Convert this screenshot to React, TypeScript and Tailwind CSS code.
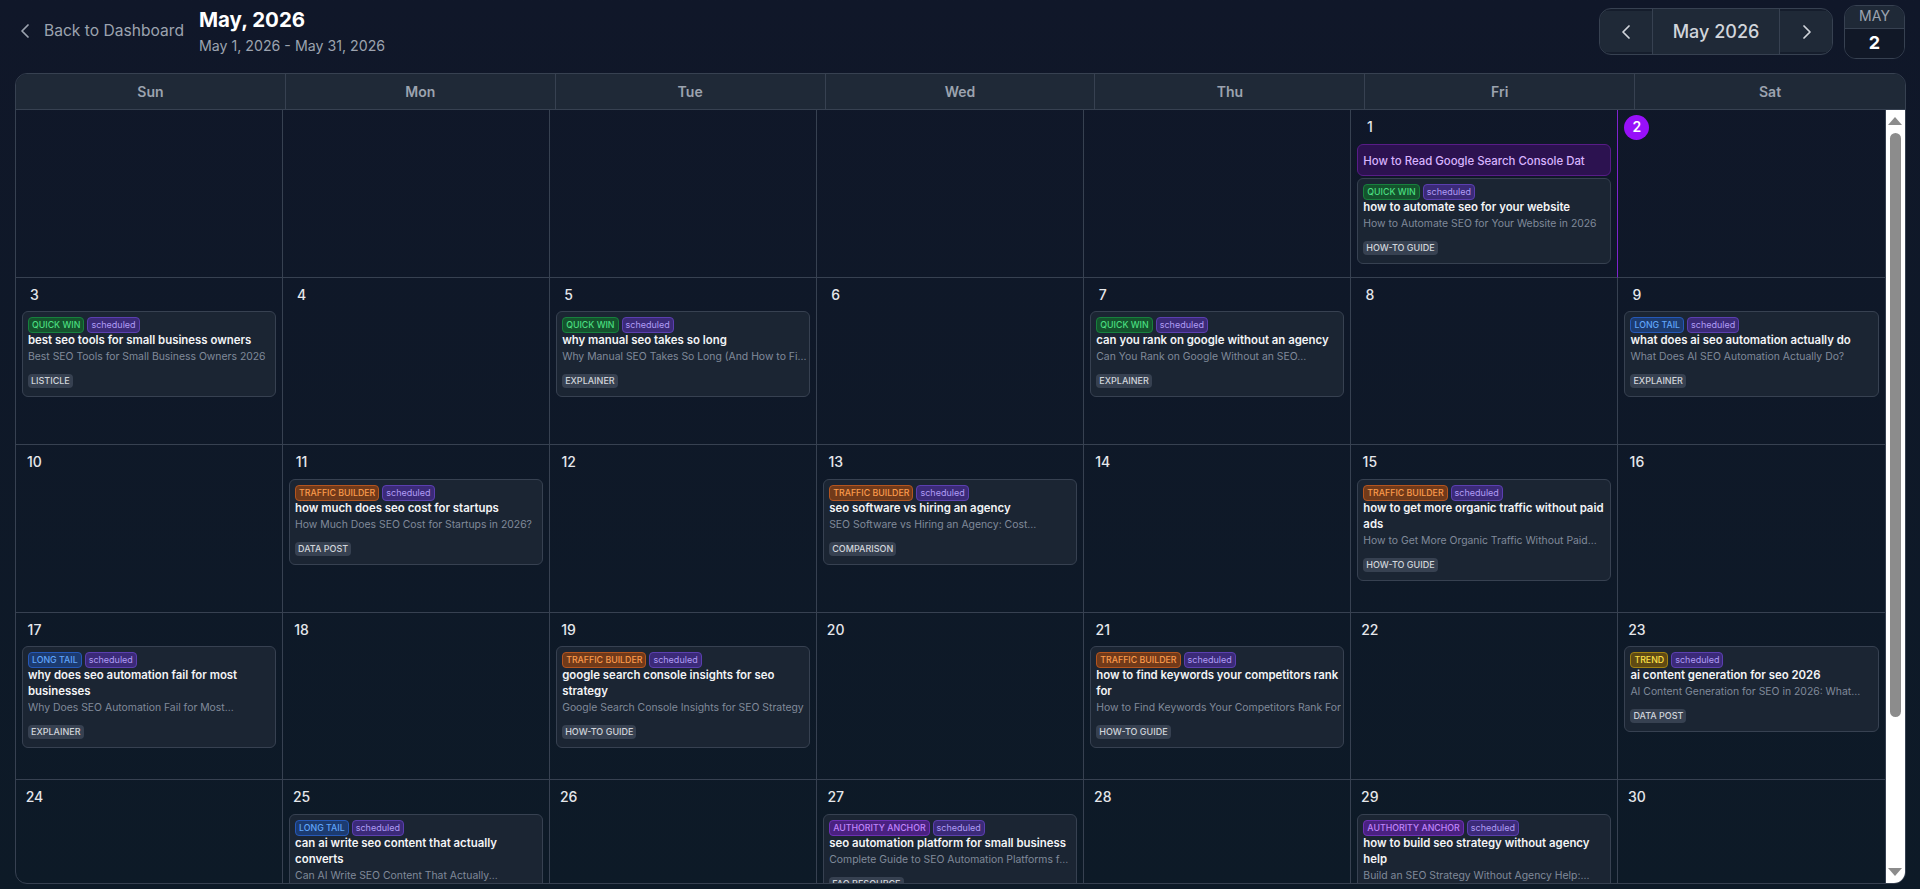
import { ChevronLeft, ChevronRight } from "lucide-react";

type Kind = "win" | "traffic" | "tail" | "trend" | "anchor";

type Post = {
  kind: Kind;
  title: string;
  sub: string;
  tag: string;
};

const kinds: Record<Kind, { label: string; className: string }> = {
  win: { label: "QUICK WIN", className: "bg-[#14532d] border-[#17803d] text-[#4ade80]" },
  traffic: { label: "TRAFFIC BUILDER", className: "bg-[#713a1a] border-[#b4541e] text-[#fb9a4c]" },
  tail: { label: "LONG TAIL", className: "bg-[#1c3b70] border-[#2558b8] text-[#60a5fa]" },
  trend: { label: "TREND", className: "bg-[#5f4a14] border-[#a18212] text-[#fde047]" },
  anchor: { label: "AUTHORITY ANCHOR", className: "bg-[#4a2180] border-[#6d2fb5] text-[#c084fc]" },
};

const weekDays = ["Sun", "Mon", "Tue", "Wed", "Thu", "Fri", "Sat"];

const days: { day?: number; posts?: Post[] }[] = [
  {}, {}, {}, {}, {},
  {
    day: 1,
    posts: [
      {
        kind: "win",
        title: "how to automate seo for your website",
        sub: "How to Automate SEO for Your Website in 2026",
        tag: "HOW-TO GUIDE",
      },
    ],
  },
  { day: 2 },
  {
    day: 3,
    posts: [
      {
        kind: "win",
        title: "best seo tools for small business owners",
        sub: "Best SEO Tools for Small Business Owners 2026",
        tag: "LISTICLE",
      },
    ],
  },
  { day: 4 },
  {
    day: 5,
    posts: [
      {
        kind: "win",
        title: "why manual seo takes so long",
        sub: "Why Manual SEO Takes So Long (And How to Fi...",
        tag: "EXPLAINER",
      },
    ],
  },
  { day: 6 },
  {
    day: 7,
    posts: [
      {
        kind: "win",
        title: "can you rank on google without an agency",
        sub: "Can You Rank on Google Without an SEO...",
        tag: "EXPLAINER",
      },
    ],
  },
  { day: 8 },
  {
    day: 9,
    posts: [
      {
        kind: "tail",
        title: "what does ai seo automation actually do",
        sub: "What Does AI SEO Automation Actually Do?",
        tag: "EXPLAINER",
      },
    ],
  },
  { day: 10 },
  {
    day: 11,
    posts: [
      {
        kind: "traffic",
        title: "how much does seo cost for startups",
        sub: "How Much Does SEO Cost for Startups in 2026?",
        tag: "DATA POST",
      },
    ],
  },
  { day: 12 },
  {
    day: 13,
    posts: [
      {
        kind: "traffic",
        title: "seo software vs hiring an agency",
        sub: "SEO Software vs Hiring an Agency: Cost...",
        tag: "COMPARISON",
      },
    ],
  },
  { day: 14 },
  {
    day: 15,
    posts: [
      {
        kind: "traffic",
        title: "how to get more organic traffic without paid ads",
        sub: "How to Get More Organic Traffic Without Paid...",
        tag: "HOW-TO GUIDE",
      },
    ],
  },
  { day: 16 },
  {
    day: 17,
    posts: [
      {
        kind: "tail",
        title: "why does seo automation fail for most businesses",
        sub: "Why Does SEO Automation Fail for Most...",
        tag: "EXPLAINER",
      },
    ],
  },
  { day: 18 },
  {
    day: 19,
    posts: [
      {
        kind: "traffic",
        title: "google search console insights for seo strategy",
        sub: "Google Search Console Insights for SEO Strategy",
        tag: "HOW-TO GUIDE",
      },
    ],
  },
  { day: 20 },
  {
    day: 21,
    posts: [
      {
        kind: "traffic",
        title: "how to find keywords your competitors rank for",
        sub: "How to Find Keywords Your Competitors Rank For",
        tag: "HOW-TO GUIDE",
      },
    ],
  },
  { day: 22 },
  {
    day: 23,
    posts: [
      {
        kind: "trend",
        title: "ai content generation for seo 2026",
        sub: "AI Content Generation for SEO in 2026: What...",
        tag: "DATA POST",
      },
    ],
  },
  { day: 24 },
  {
    day: 25,
    posts: [
      {
        kind: "tail",
        title: "can ai write seo content that actually converts",
        sub: "Can AI Write SEO Content That Actually...",
        tag: "LISTICLE",
      },
    ],
  },
  { day: 26 },
  {
    day: 27,
    posts: [
      {
        kind: "anchor",
        title: "seo automation platform for small business",
        sub: "Complete Guide to SEO Automation Platforms fo...",
        tag: "FAQ RESOURCE",
      },
    ],
  },
  { day: 28 },
  {
    day: 29,
    posts: [
      {
        kind: "anchor",
        title: "how to build seo strategy without agency help",
        sub: "Build an SEO Strategy Without Agency Help:...",
        tag: "HOW-TO GUIDE",
      },
    ],
  },
  { day: 30 },
];

function PostCard({ post }: { post: Post }) {
  const kind = kinds[post.kind];
  return (
    <div className="rounded-md border border-[#374151] bg-[#1b2533] pt-[5px] pr-[2px] pb-[8px] pl-[5px]">
      <div className="flex gap-[3px]">
        <span className={`h-4 rounded border px-[3px] text-[8.8px] leading-[14px] font-medium ${kind.className}`}>
          {kind.label}
        </span>
        <span className="h-4 rounded border border-[#5b3fb0] bg-[#3b2a78] px-[3px] text-[9px] leading-[14px] text-[#b09cf5]">
          scheduled
        </span>
      </div>
      <div className="-mt-px text-[11.4px] leading-4 font-semibold text-[#f3f4f6]">{post.title}</div>
      <div className="mt-px truncate text-[10.4px] leading-4 text-[#808a9a]">{post.sub}</div>
      <div className="mt-[9px] flex">
        <span className="h-[14px] rounded bg-[#374151] px-[3px] text-[9px] leading-[14px] font-medium text-[#d1d5db]">
          {post.tag}
        </span>
      </div>
    </div>
  );
}

function DayCell({ day, posts }: { day?: number; posts?: Post[] }) {
  const isToday = day === 2;
  return (
    <div
      className={`h-[167.5px] overflow-hidden border-r border-b border-[#374151] px-[6px] pt-[4.7px] ${
        day === 1 ? "border-r-[#7e22ce]" : ""
      }`}
    >
      {day && (
        <div
          className={`mb-[3.9px] flex h-[25px] w-[25px] items-center justify-center rounded-full text-sm ${
            isToday ? "bg-[#9810fa] font-semibold text-white" : "font-medium text-[#e5e7eb]"
          }`}
        >
          {day}
        </div>
      )}
      {day === 1 && (
        <div className="mb-[2px] h-[32px] overflow-hidden rounded-md border border-[#581c87] bg-[#2c1250] px-[5px] text-[11.4px] leading-[32px] font-medium whitespace-nowrap text-[#d8b4fe]">
          How to Read Google Search Console Dat
        </div>
      )}
      {posts?.map((post) => <PostCard key={post.title} post={post} />)}
    </div>
  );
}

export default function App() {
  return (
    <div className="flex h-screen flex-col overflow-hidden bg-gradient-to-b from-[#101729] to-[#0d1a27] pr-[14px] pb-[5px] pl-[15px] font-['Inter',sans-serif]">
      {/* Top bar */}
      <div className="mr-px mb-[10px] flex h-[63px] shrink-0 items-center justify-between">
        <div className="flex items-center">
          <a className="mb-px -ml-[2px] flex items-center gap-[7px] text-[15.6px] text-[#9ca3af]">
            <ChevronLeft className="h-6 w-6" strokeWidth={1.75} />
            Back to Dashboard
          </a>
          <div className="ml-[15px]">
            <h1 className="text-[20.5px] leading-[26px] font-bold text-white">May, 2026</h1>
            <p className="mt-[3px] text-[14.2px] leading-5 text-[#9ca3af]">May 1, 2026 - May 31, 2026</p>
          </div>
        </div>
        <div className="flex items-center gap-[11px]">
          <div className="flex h-[47px] w-[234px] items-center overflow-hidden rounded-xl border border-[#374151] bg-[#151d2c]">
            <button className="flex h-[41px] w-[52px] items-center justify-center bg-[#1f2937] pr-px text-[#d1d5db]">
              <ChevronLeft className="h-6 w-6" strokeWidth={1.75} />
            </button>
            <div className="flex h-full flex-1 items-center justify-center border-x border-[#374151] bg-[#1f2937] text-lg font-medium text-[#d1d5db]">
              May 2026
            </div>
            <button className="flex h-[41px] w-[52px] items-center justify-center bg-[#1f2937] pl-px text-[#d1d5db]">
              <ChevronRight className="h-6 w-6" strokeWidth={1.75} />
            </button>
          </div>
          <div className="w-[61px] overflow-hidden rounded-xl border border-[#374151] text-center">
            <div className="h-[23px] border-b border-[#374151] bg-[#1f2937] text-sm leading-[20px] text-[#9ca3af]">
              MAY
            </div>
            <div className="h-[29px] bg-[#111827] text-lg leading-[27px] font-bold text-white">2</div>
          </div>
        </div>
      </div>

      {/* Calendar */}
      <div className="flex min-h-0 flex-1 flex-col overflow-hidden rounded-xl border border-[#374151]">
        <div className="grid h-[36px] shrink-0 grid-cols-7 border-b border-[#374151] bg-[#1f2937]">
          {weekDays.map((name) => (
            <div
              key={name}
              className="flex items-center justify-center border-r border-[#374151] text-sm font-semibold text-[#9ca3af] last:border-r-0"
            >
              {name}
            </div>
          ))}
        </div>
        <div className="flex min-h-0 flex-1">
          <div className="min-w-0 flex-1 overflow-hidden">
            <div className="grid grid-cols-7">
              {days.map((cell, i) => (
                <DayCell key={i} day={cell.day} posts={cell.posts} />
              ))}
            </div>
          </div>
          {/* Scrollbar */}
          <div className="flex w-[19.5px] shrink-0 flex-col items-center bg-white pt-[7px]">
            <div className="h-0 w-0 border-x-[7px] border-b-[8px] border-x-transparent border-b-[#8c8c8c]" />
            <div className="mt-[8px] h-[584px] w-[11px] rounded-full bg-[#8c8c8c]" />
            <div className="mt-auto mb-[7px] h-0 w-0 border-x-[7px] border-t-[8px] border-x-transparent border-t-[#8c8c8c]" />
          </div>
        </div>
      </div>
    </div>
  );
}
